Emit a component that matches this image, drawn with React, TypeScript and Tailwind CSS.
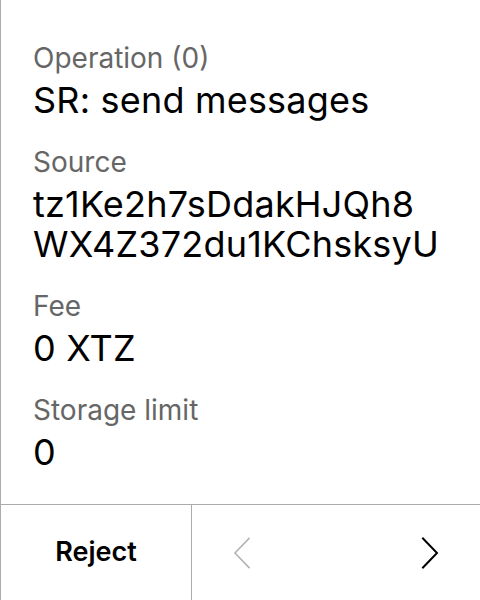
import React from 'react';

interface Field {
  label: string;
  value: string[];
}

const fields: Field[] = [
  { label: 'Operation (0)', value: ['SR: send messages'] },
  { label: 'Source', value: ['tz1Ke2h7sDdakHJQh8', 'WX4Z372du1KChsksyU'] },
  { label: 'Fee', value: ['0 XTZ'] },
  { label: 'Storage limit', value: ['0'] },
];

const Chevron: React.FC<{ dir: 'left' | 'right'; className?: string }> = ({ dir, className }) => (
  <svg width="18" height="32" viewBox="0 0 18 32" fill="none" className={className}>
    <polyline
      points={dir === 'left' ? '16,1.5 2,16 16,30.5' : '2,1.5 16,16 2,30.5'}
      stroke="currentColor"
      strokeWidth={dir === 'left' ? 1.6 : 2}
      strokeLinecap="square"
    />
  </svg>
);

const App: React.FC = () => {
  return (
    <div
      className="w-[480px] h-[600px] flex flex-col bg-white border-l border-[#ababab] text-black"
      style={{ fontFamily: 'Inter, "Noto Sans", sans-serif' }}
    >
      <div className="flex-1 px-8 pt-[41px] flex flex-col gap-[25px]">
        {fields.map((f) => (
          <div key={f.label} className="flex flex-col gap-[5px]">
            <div className="text-[28px] leading-[34px] text-[#666666]">{f.label}</div>
            <div className="text-[36px] leading-[40px] tracking-[0.2px]">
              {f.value.map((line) => (
                <div key={line} className="whitespace-nowrap">{line}</div>
              ))}
            </div>
          </div>
        ))}
      </div>

      {/* footer actions */}
      <div className="h-[96px] flex border-t border-[#ababab]">
        <button className="w-[191px] flex items-center justify-center border-r border-[#ababab] text-[27px] font-semibold">
          Reject
        </button>
        <div className="flex-1 flex items-center justify-between pl-[41px] pr-[41px]">
          <Chevron dir="left" className="text-[#b3b3b3]" />
          <Chevron dir="right" className="text-black" />
        </div>
      </div>
    </div>
  );
};

export default App;
